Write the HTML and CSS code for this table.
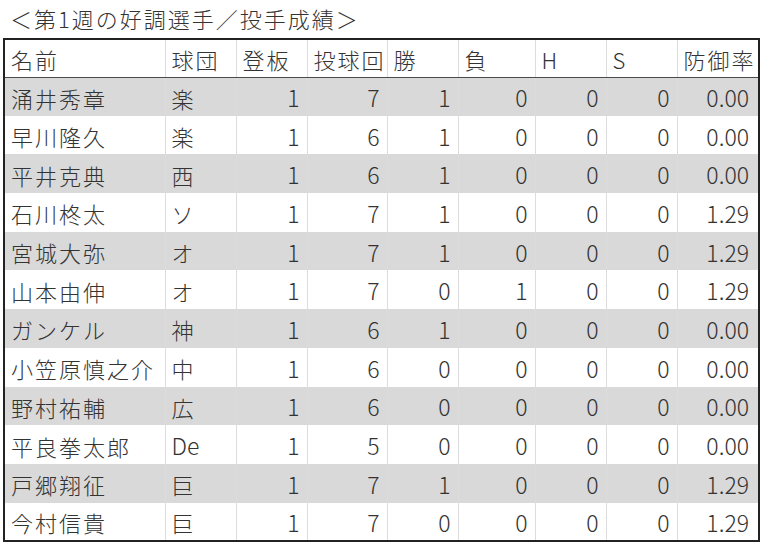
FILE: index.html
```html
<!DOCTYPE html>
<html lang="ja">
<head>
<meta charset="utf-8">
<link rel="stylesheet" href="styles.css">
</head>
<body>
<div class="title">＜第1週の好調選手／投手成績＞</div>
<table class="stats">
<colgroup>
<col class="c-name"><col class="c-team"><col class="c-g"><col class="c-ip"><col class="c-w"><col class="c-l"><col class="c-h"><col class="c-s"><col class="c-era">
</colgroup>
<thead>
<tr><th>名前</th><th>球団</th><th>登板</th><th>投球回</th><th>勝</th><th>負</th><th>H</th><th>S</th><th>防御率</th></tr>
</thead>
<tbody>
<tr class="shade"><td>涌井秀章</td><td>楽</td><td class="n">1</td><td class="n">7</td><td class="n">1</td><td class="n">0</td><td class="n">0</td><td class="n">0</td><td class="n">0.00</td></tr>
<tr><td>早川隆久</td><td>楽</td><td class="n">1</td><td class="n">6</td><td class="n">1</td><td class="n">0</td><td class="n">0</td><td class="n">0</td><td class="n">0.00</td></tr>
<tr class="shade"><td>平井克典</td><td>西</td><td class="n">1</td><td class="n">6</td><td class="n">1</td><td class="n">0</td><td class="n">0</td><td class="n">0</td><td class="n">0.00</td></tr>
<tr><td>石川柊太</td><td>ソ</td><td class="n">1</td><td class="n">7</td><td class="n">1</td><td class="n">0</td><td class="n">0</td><td class="n">0</td><td class="n">1.29</td></tr>
<tr class="shade"><td>宮城大弥</td><td>オ</td><td class="n">1</td><td class="n">7</td><td class="n">1</td><td class="n">0</td><td class="n">0</td><td class="n">0</td><td class="n">1.29</td></tr>
<tr><td>山本由伸</td><td>オ</td><td class="n">1</td><td class="n">7</td><td class="n">0</td><td class="n">1</td><td class="n">0</td><td class="n">0</td><td class="n">1.29</td></tr>
<tr class="shade"><td>ガンケル</td><td>神</td><td class="n">1</td><td class="n">6</td><td class="n">1</td><td class="n">0</td><td class="n">0</td><td class="n">0</td><td class="n">0.00</td></tr>
<tr><td>小笠原慎之介</td><td>中</td><td class="n">1</td><td class="n">6</td><td class="n">0</td><td class="n">0</td><td class="n">0</td><td class="n">0</td><td class="n">0.00</td></tr>
<tr class="shade"><td>野村祐輔</td><td>広</td><td class="n">1</td><td class="n">6</td><td class="n">0</td><td class="n">0</td><td class="n">0</td><td class="n">0</td><td class="n">0.00</td></tr>
<tr><td>平良拳太郎</td><td class="latin">De</td><td class="n">1</td><td class="n">5</td><td class="n">0</td><td class="n">0</td><td class="n">0</td><td class="n">0</td><td class="n">0.00</td></tr>
<tr class="shade"><td>戸郷翔征</td><td>巨</td><td class="n">1</td><td class="n">7</td><td class="n">1</td><td class="n">0</td><td class="n">0</td><td class="n">0</td><td class="n">1.29</td></tr>
<tr><td>今村信貴</td><td>巨</td><td class="n">1</td><td class="n">7</td><td class="n">0</td><td class="n">0</td><td class="n">0</td><td class="n">0</td><td class="n">1.29</td></tr>
</tbody>
</table>
</body>
</html>
```
FILE: styles.css
```css
html, body {
  margin: 0;
  padding: 0;
  background: #ffffff;
}
body {
  font-family: "Noto Sans CJK JP", "Noto Sans", sans-serif;
  color: #333333;
}
.title {
  height: 38px;
  line-height: 36px;
  padding-left: 10px;
  font-size: 22px;
  letter-spacing: 2px;
  font-weight: 300;
}
.stats {
  margin-left: 3px;
  width: 755px;
  table-layout: fixed;
  border-collapse: collapse;
  border: 2px solid #222222;
  font-size: 22px;
}
.c-name { width: 161px; }
.c-team { width: 71px; }
.c-g { width: 71px; }
.c-ip { width: 80px; }
.c-w { width: 71px; }
.c-l { width: 77px; }
.c-h { width: 71px; }
.c-s { width: 71px; }
.c-era { width: 82px; }
.stats th, .stats td {
  box-sizing: border-box;
  height: 38.7px;
  padding: 2px 6px 0 6px;
  border-left: 1px solid #dcdcdc;
  border-right: 1px solid #dcdcdc;
  text-align: left;
  font-weight: 300;
  white-space: nowrap;
  letter-spacing: 2px;
  line-height: 1;
  vertical-align: middle;
}
.stats thead th {
  height: 38px;
  border-bottom: 1px solid #4a4a4a;
}
.stats .shade td {
  background: #d9d9d9;
}
.stats td.latin {
  letter-spacing: 0;
  font-size: 23px;
}
.stats td.n {
  text-align: right;
  letter-spacing: 0;
  padding-right: 7px;
  font-size: 23px;
}
.stats td.n:last-child {
  padding-right: 9px;
}
```
